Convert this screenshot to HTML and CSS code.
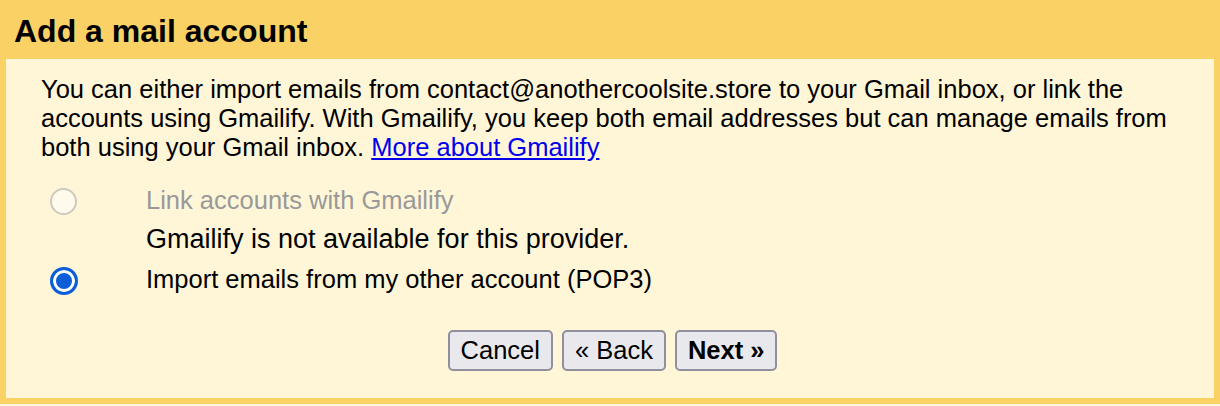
FILE: index.html
```html
<!DOCTYPE html>
<html>
<head>
<meta charset="utf-8">
<link rel="stylesheet" href="styles.css">
</head>
<body>
<div class="dialog">
  <div class="header"><h1 class="title">Add a mail account</h1></div>
  <div class="panel">
    <p class="intro">You can either import emails from contact@anothercoolsite.store to your Gmail inbox, or link the accounts using Gmailify. With Gmailify, you keep both email addresses but can manage emails from both using your Gmail inbox. <a href="#" class="link">More about Gmailify</a></p>
    <div class="options">
      <div class="opt-cell"><input type="radio" name="mode" class="radio" disabled></div>
      <div class="label disabled">Link accounts with Gmailify</div>
      <div class="opt-cell"></div>
      <div class="label note">Gmailify is not available for this provider.</div>
      <div class="opt-cell"><input type="radio" name="mode" class="radio" checked></div>
      <div class="label">Import emails from my other account (POP3)</div>
    </div>
    <div class="buttons">
      <button class="btn">Cancel</button>
      <button class="btn">« Back</button>
      <button class="btn primary">Next »</button>
    </div>
  </div>
</div>
</body>
</html>
```

FILE: styles.css
```css
html, body {
  margin: 0;
  padding: 0;
  background: #fef7dc;
}
body {
  font-family: "Liberation Sans", Arial, sans-serif;
  color: #000;
}
.dialog {
  width: 1220px;
  height: 404px;
  box-sizing: border-box;
  background: #f9d165;
  padding: 0 6px 6px 6px;
  display: flex;
  flex-direction: column;
}
.header {
  height: 59px;
  flex: none;
}
.title {
  margin: 0;
  padding: 12px 0 0 8px;
  font-size: 32px;
  line-height: 38px;
  font-weight: bold;
}
.panel {
  flex: 1;
  background: #fff6d8;
  padding: 16px 30px 0 35px;
}
.intro {
  margin: 0;
  font-size: 25.5px;
  line-height: 29px;
}
.link {
  color: #0000ee;
  text-decoration: underline;
}
.options {
  display: grid;
  grid-template-columns: 105px 1fr;
  grid-template-rows: 40px 39px 40px;
  margin-top: 18px;
  font-size: 25.5px;
}
.opt-cell {
  display: flex;
  align-items: center;
  padding-left: 9px;
}
.label {
  line-height: 40px;
  white-space: nowrap;
}
.label.note {
  font-size: 27px;
  line-height: 38px;
}
.label.disabled {
  color: #999999;
}
.radio {
  appearance: none;
  -webkit-appearance: none;
  margin: 2px 0 0 0;
  width: 27px;
  height: 27px;
  border-radius: 50%;
  box-sizing: border-box;
  border: 2px solid #cdc9c0;
  background: #fffbec;
}
.radio:checked {
  width: 28px;
  height: 28px;
  margin-top: 4px;
  border: 3px solid #0b5ed7;
  background: #0b5ed7;
  box-shadow: inset 0 0 0 3px #fff;
}
.buttons {
  display: flex;
  justify-content: center;
  gap: 9px;
  margin-top: 31px;
}
.btn {
  font-family: "Liberation Sans", Arial, sans-serif;
  font-size: 25.5px;
  height: 41px;
  padding: 0 11px;
  border: 2px solid #8f8f9d;
  border-radius: 5px;
  background: #e9e9ed;
  color: #000;
}
.btn.primary {
  font-weight: bold;
}
```
